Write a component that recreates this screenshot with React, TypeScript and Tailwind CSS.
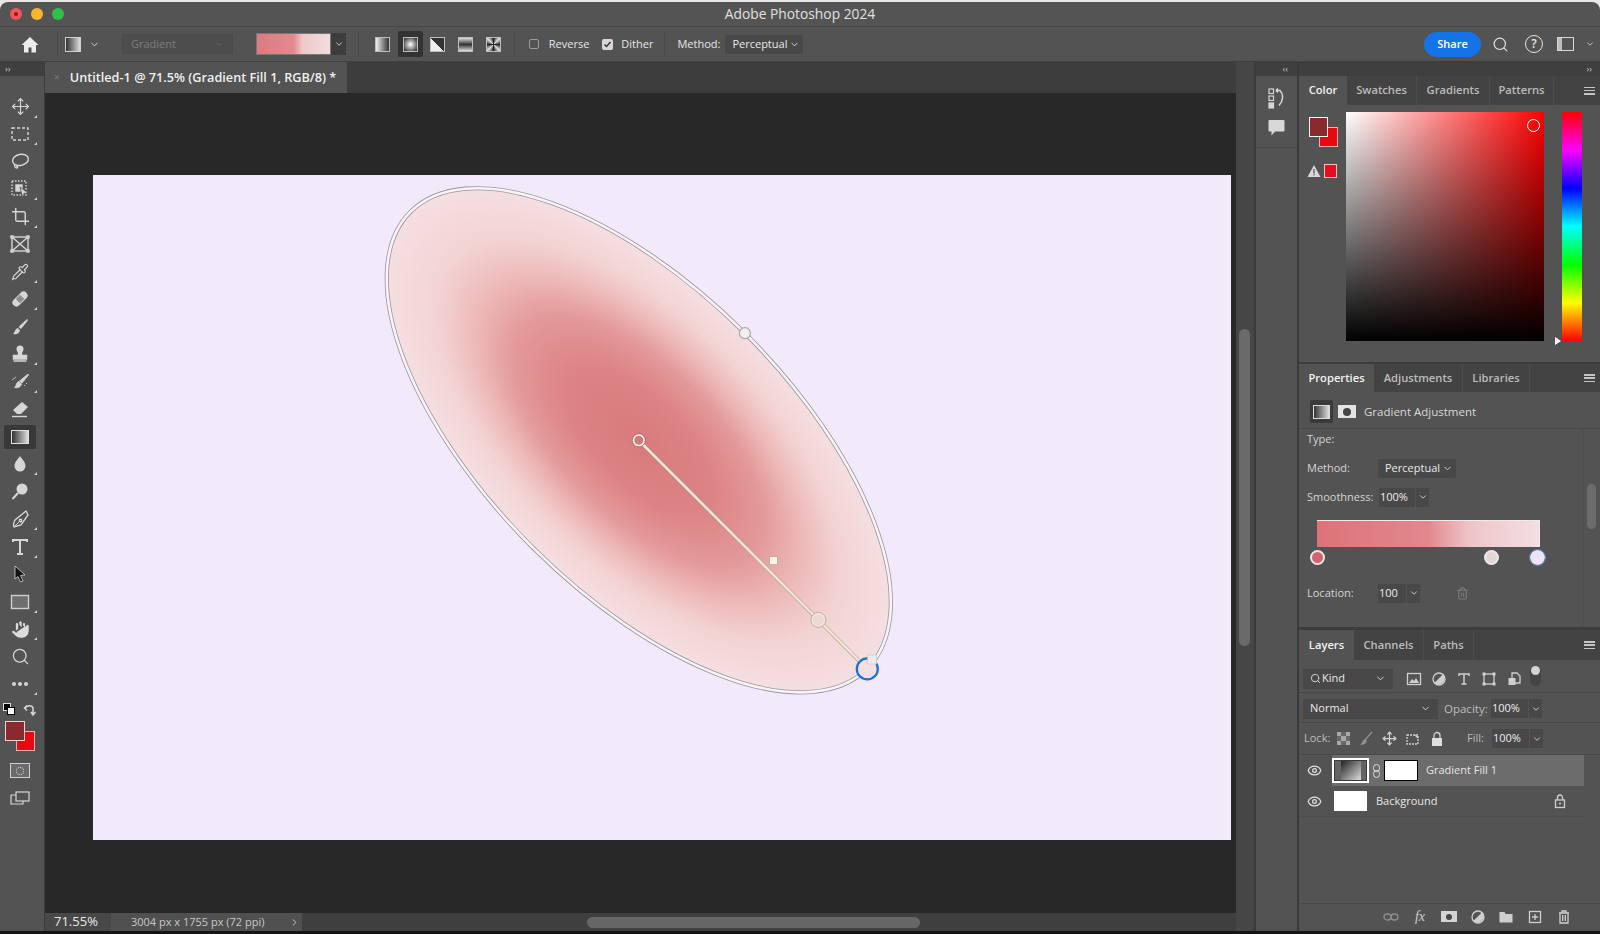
import type { ReactNode } from "react";
import { ChevronDown, ChevronRight, Crop, Eye, Hand, Move, Pipette, Search, Trash2 } from "lucide-react";

const FONT = "font-['Open_Sans','Liberation_Sans',sans-serif]";

function Svg({ children, size = 20 }: { children: ReactNode; size?: number }) {
  return (
    <svg width={size} height={size} viewBox="0 0 20 20" fill="none" stroke="#d6d6d6" strokeWidth="1.4">
      {children}
    </svg>
  );
}

const tools: ReactNode[] = [
  <Move size={19} color="#d6d6d6" strokeWidth={1.5} />,
  <Svg><rect x="2" y="4" width="16" height="12" strokeDasharray="3 2" /></Svg>,
  <Svg><ellipse cx="10.5" cy="8" rx="8" ry="5.5" transform="rotate(-12 10 8)" /><path d="M5 12c-1 2 0 4 2 4 1 0 1-2-1-2" /></Svg>,
  <Svg><rect x="2" y="2" width="14" height="14" strokeDasharray="1.5 1.5" /><rect x="6" y="6" width="6" height="6" fill="#d6d6d6" /><path d="M10 8l8 6-4 .5-1.5 4z" fill="#d6d6d6" stroke="#535353" strokeWidth="0.8" /></Svg>,
  <Crop size={19} color="#d6d6d6" strokeWidth={1.8} />,
  <Svg><rect x="2" y="3" width="16" height="14" /><path d="M2 3l16 14M18 3L2 17" /><g fill="#d6d6d6"><rect x="1" y="2" width="2" height="2" /><rect x="17" y="2" width="2" height="2" /><rect x="1" y="16" width="2" height="2" /><rect x="17" y="16" width="2" height="2" /></g></Svg>,
  <Pipette size={18} color="#d6d6d6" strokeWidth={1.6} />,
  <Svg><g transform="rotate(-45 10 10)"><rect x="1" y="6" width="18" height="8" rx="4" fill="#d6d6d6" stroke="none" /><rect x="7" y="7" width="6" height="6" fill="#8d8d8d" stroke="none" /></g></Svg>,
  <Svg><path d="M17 2c1 .5 1 1 .5 2L11 12 8.500 10zM8 11l2 2.500c-.5 3-4 4.500-7 3.500 2-1 1.500-5 5-6z" fill="#d6d6d6" stroke="none" /></Svg>,
  <Svg><circle cx="10" cy="5" r="3.500" fill="#d6d6d6" stroke="none" /><path d="M8.500 8h3v3.500h5V15h-13v-3.500h5zM3.500 17h13" fill="#d6d6d6" /></Svg>,
  <Svg><path d="M18 2l.5 1L12 11l-2.500-2zM9 9.500l2.500 2.500c-.5 3-4 4.500-7 3.500 2-1 1.500-5.500 4.500-6zM2 8l4-3M14 13l1 1M16 11l1 1" fill="#d6d6d6" stroke="#d6d6d6" strokeWidth="0.8" /></Svg>,
  <Svg><path d="M12 3l6 5-7 7H7L3 11z" fill="#d6d6d6" stroke="none" /><path d="M2 17.500h15" /></Svg>,
  null,
  <Svg><path d="M10 2c2 3 5.500 6 5.500 10a5.500 5.500 0 01-11 0C4.500 8 8 5 10 2z" fill="#d6d6d6" stroke="none" /></Svg>,
  <Svg><circle cx="12" cy="7" r="5.500" fill="#d6d6d6" stroke="none" /><path d="M8 11l-5.500 6" strokeWidth="2" /></Svg>,
  <Svg><path d="M16 2l2 4-7 10-7 2c-1-2 0-5 1-7z" /><path d="M4.500 17.500l5-5" strokeWidth="1" /><circle cx="10.500" cy="11.500" r="1.200" /></Svg>,
  <Svg><path d="M3 5V3h14v2M10 3v14M7 17h6" strokeWidth="2" /></Svg>,
  <Svg><path d="M5 2l10 9-4.500.5L13 17l-2.500 1-2.500-5.500L5 15z" fill="#111" stroke="#d6d6d6" strokeWidth="0.8" /></Svg>,
  <Svg><rect x="1.500" y="3.500" width="17" height="13" fill="#6e6e6e" stroke="#cfcfcf" /></Svg>,
  <Hand size={21} color="#535353" fill="#dcdcdc" strokeWidth={1.3} />,
  <Search size={19} color="#d6d6d6" strokeWidth={1.6} />,
  <Svg><g fill="#d6d6d6" stroke="none"><circle cx="4" cy="10" r="2" /><circle cx="10" cy="10" r="2" /><circle cx="16" cy="10" r="2" /></g></Svg>,
];

function Toolbar() {
  return (
    <div className="w-[45px] shrink-0 flex flex-col bg-[#535353] border-r border-[#3c3c3c]">
      <div className="h-[14px] bg-[#3f3f3f] pl-[5px] text-[9px] leading-[13px] text-[#c8c8c8]">››</div>
      <div className="pt-[17px] pl-[2px] flex flex-col items-start">
        {tools.map((t, i) =>
          t === null ? (
            <div key={i} className="relative w-[36px] h-[27.5px] flex items-center justify-center">
              <div className="w-[32px] h-[24px] bg-[#383838] rounded-[2px] flex items-center justify-center">
                <div className="w-[18px] h-[14px] border border-[#e0e0e0] bg-[linear-gradient(to_right,#333,#ddd)]" />
              </div>
            </div>
          ) : (
            <div key={i} className="relative w-[36px] h-[27.5px] flex items-center justify-center">
              {t}
              {i % 3 !== 2 && <span className="absolute right-[1px] bottom-[3px] w-0 h-0 border-l-[3px] border-l-transparent border-b-[3px] border-b-[#cfcfcf]" />}
            </div>
          ),
        )}
      </div>
      <div className="relative h-[50px] mt-[5px]">
        <div className="absolute left-[3px] top-0 w-[8px] h-[8px] bg-black border border-[#ddd]" />
        <div className="absolute left-[7px] top-[4px] w-[8px] h-[8px] bg-white border border-black" />
        <svg className="absolute left-[23px] top-0" width="14" height="14" viewBox="0 0 14 14" fill="none" stroke="#d6d6d6" strokeWidth="1.500">
          <path d="M2 5c3-3 7-3 8 0v6M8 9l2 3 2.500-3M4 2.500L1.500 5 4 7.500" />
        </svg>
        <div className="absolute left-[16px] top-[28px] w-[19px] h-[20px] bg-[#e8080f] border border-[#f0b0b0]" />
        <div className="absolute left-[5px] top-[18px] w-[20px] h-[20px] bg-[#8a2a2e] border border-[#f0d0d0]" />
      </div>
      <div className="mt-[10px] pr-[5px] flex flex-col items-center gap-[13px]">
        <div className="w-[20px] h-[15px] border border-[#d0d0d0] bg-[#6a6a6a] flex items-center justify-center">
          <div className="w-[8px] h-[8px] rounded-full border border-dotted border-[#e0e0e0]" />
        </div>
        <svg width="20" height="14" viewBox="0 0 20 14" fill="none" stroke="#d6d6d6" strokeWidth="1.200">
          <rect x="6" y="1" width="13" height="9" />
          <path d="M6 4H1v9h12v-3" />
        </svg>
      </div>
    </div>
  );
}

function Select({ w, children }: { w: string; children: ReactNode }) {
  return (
    <div className={`${w} h-[19px] pl-[7px] pr-[3px] flex items-center justify-between bg-[#484848] rounded-[2px] text-[11px] text-[#e8e8e8]`}>
      <span>{children}</span>
      <ChevronDown size={11} color="#e0e0e0" strokeWidth={2} />
    </div>
  );
}

function PctInput({ value, w = "w-[37px]" }: { value: string; w?: string }) {
  return (
    <div className="flex h-[19px] items-center text-[11px] text-[#ececec]">
      <div className={`${w} h-full flex items-center pl-[1px] bg-[#484848]`}>{value}</div>
      <div className="ml-px w-[13px] h-full flex items-center justify-center bg-[#484848]">
        <ChevronDown size={10} color="#e0e0e0" strokeWidth={2} />
      </div>
    </div>
  );
}

function GradType({ className, active }: { className: string; active?: boolean }) {
  return (
    <div className={`w-[25px] h-[26px] flex items-center justify-center rounded-[2px] ${active ? "bg-[#333]" : ""}`}>
      <div className={`w-[15px] h-[15px] border border-[#bdbdbd] ${className}`} />
    </div>
  );
}

function OptionsBar() {
  return (
    <div className="h-[35px] shrink-0 flex items-center bg-[#535353] border-b border-[#3f3f3f] text-[11px] text-[#e6e6e6]">
      <div className="w-[57px] flex justify-center pl-[2px]">
        <svg width="18" height="17" viewBox="0 0 18 17" fill="#ececec">
          <path d="M9 1L0.500 9h2.500v7.500h4.500v-5h3v5H15V9h2.500z" />
        </svg>
      </div>
      <div className="w-px h-[24px] bg-[#484848]" />
      <div className="ml-[7px] w-[16px] h-[15px] border border-[#d0d0d0] bg-[linear-gradient(to_right,#333,#ddd)]" />
      <ChevronDown size={11} color="#d8d8d8" strokeWidth={2} className="ml-[8px]" />
      <div className="ml-[22px] w-[111px] h-[20px] px-[8px] flex items-center justify-between bg-[#4d4d4d] border border-[#4a4a4a] text-[#7d7d7d]">
        Gradient
        <ChevronDown size={9} color="#6f6f6f" />
      </div>
      <div className="ml-[23px] w-[75px] h-[22px] border border-[#777] bg-[linear-gradient(to_right,#dc7a80,#e28a8e_50%,#f0c8c8_62%,#f3dcdf)]" />
      <div className="w-[15px] h-[22px] bg-[#3d3d3d] flex items-center justify-center">
        <ChevronDown size={10} color="#e0e0e0" strokeWidth={2} />
      </div>
      <div className="ml-[12px] w-px h-[24px] bg-[#484848]" />
      <div className="ml-[11px] flex gap-[2.700px]">
        <GradType className="bg-[linear-gradient(to_right,#eee,#333)]" />
        <GradType active className="bg-[radial-gradient(circle,#fff,#222)]" />
        <GradType className="bg-[linear-gradient(45deg,#eee_50%,#333_50%)]" />
        <GradType className="bg-[linear-gradient(to_bottom,#ddd,#333_50%,#ddd)]" />
        <GradType className="bg-[conic-gradient(#222,#ddd,#222,#ddd,#222,#ddd,#222,#ddd,#222)]" />
      </div>
      <div className="ml-[8px] w-px h-[24px] bg-[#484848]" />
      <div className="ml-[14px] w-[10px] h-[10px] rounded-[2px] border border-[#9a9a9a]" />
      <span className="ml-[10px]">Reverse</span>
      <div className="ml-[13px] w-[11px] h-[11px] rounded-[2px] bg-[#d8d8d8] flex items-center justify-center">
        <svg width="9" height="9" viewBox="0 0 9 9" fill="none" stroke="#333" strokeWidth="1.500"><path d="M1.500 4.500l2 2 4-4.500" /></svg>
      </div>
      <span className="ml-[8px]">Dither</span>
      <div className="ml-[11px] w-px h-[24px] bg-[#484848]" />
      <span className="ml-[12px]">Method:</span>
      <div className="ml-[5px]"><Select w="w-[78px]">Perceptual</Select></div>
      <div className="flex-1" />
      <div className="w-[57px] h-[25px] rounded-full bg-[#1473e6] text-white text-[11px] font-semibold flex items-center justify-center">Share</div>
      <Search size={17} color="#e6e6e6" strokeWidth={1.6} className="ml-[11px]" />
      <div className="ml-[16px] w-[18px] h-[18px] rounded-full border-[1.5px] border-[#e6e6e6] flex items-center justify-center text-[12px] font-semibold leading-none">?</div>
      <div className="ml-[14px] w-[17px] h-[14px] border border-[#d8d8d8] flex">
        <div className="w-[4px] h-full bg-[#bdbdbd]" />
      </div>
      <ChevronDown size={10} color="#d8d8d8" strokeWidth={2} className="ml-[11px] mr-[5px]" />
    </div>
  );
}

function Shape() {
  return (
    <svg className="absolute inset-0 overflow-visible" width="1138" height="665" viewBox="0 0 1138 665" fill="none">
      <defs>
        <radialGradient id="fillGrad">
          <stop offset="0" stopColor="#d97a7c" />
          <stop offset="0.3" stopColor="#dd8486" />
          <stop offset="0.5" stopColor="#e49a9a" />
          <stop offset="0.65" stopColor="#edbab9" />
          <stop offset="0.8" stopColor="#f3d3d3" />
          <stop offset="1" stopColor="#f5dfe2" />
        </radialGradient>
      </defs>
      <g transform="rotate(45 545.8 265.3)">
        <ellipse cx="545.8" cy="265.3" rx="323" ry="150.800" fill="url(#fillGrad)" />
        <ellipse cx="545.8" cy="265.3" rx="323" ry="150.800" stroke="#9a969c" strokeWidth="4.200" />
        <ellipse cx="545.8" cy="265.3" rx="323" ry="150.800" stroke="#f8f4f8" strokeWidth="2.600" />
      </g>
      <path d="M545.800 265.300L774.300 493.900" stroke="#a8968c" strokeWidth="3.600" />
      <path d="M545.800 265.300L774.300 493.900" stroke="#f8e6d8" strokeWidth="2.400" />
      <circle cx="651.900" cy="158.200" r="5.500" fill="#f3eef0" stroke="#a8a4a8" strokeWidth="1.200" />
      <circle cx="545.800" cy="265.300" r="5.500" fill="#d8777a" stroke="#fdf4ec" strokeWidth="2" />
      <circle cx="545.800" cy="265.300" r="6.500" stroke="#8a5a5a" strokeWidth="0.700" />
      <rect x="676.500" y="381.700" width="8" height="8" fill="#fbf2e8" stroke="#b09a90" strokeWidth="0.600" />
      <circle cx="725.400" cy="444.900" r="6.500" fill="#f0d6d0" stroke="#efe6e0" strokeWidth="2" />
      <circle cx="725.400" cy="444.900" r="7.500" stroke="#a89a94" strokeWidth="0.700" />
      <circle cx="774.300" cy="493.900" r="10.500" fill="#f5dfe2" stroke="#1473d6" strokeWidth="2.200" />
      <rect x="774.500" y="480" width="9" height="9" fill="#eeeaee" stroke="#c8c4c8" strokeWidth="0.600" />
    </svg>
  );
}

function Center() {
  return (
    <div className="w-[1191px] shrink-0 flex flex-col bg-[#3d3d3d]">
      <div className="h-[31px] shrink-0 flex">
        <div className="w-[302px] h-[31px] bg-[#535353] flex items-center pl-[9px] text-[12.7px] font-semibold text-[#f0f0f0]">
          <span className="text-[#7c7c7c] text-[10px] font-normal mr-[10px]">×</span>
          <span>Untitled-1 @ 71.5% (Gradient Fill 1, RGB/8) *</span>
        </div>
      </div>
      <div className="flex-1 bg-[#282828] pl-[48px] pt-[82px]">
        <div className="relative w-[1138px] h-[665px] bg-[#f2e9fb]">
          <Shape />
        </div>
      </div>
      <div className="h-[18px] shrink-0 flex items-center bg-[#424242] text-[#c8c8c8]">
        <div className="w-[66px] h-full pl-[9px] flex items-center bg-[#484848] text-[13px] text-[#e8e8e8]">71.55%</div>
        <div className="w-[191px] h-full pl-[20px] flex items-center bg-[#505050] text-[11px]">
          3004 px x 1755 px (72 ppi)
          <ChevronRight size={11} color="#d0d0d0" className="ml-auto mr-[2px]" />
        </div>
        <div className="flex-1 h-full flex items-center pl-[285px] bg-[#3f3f3f]">
          <div className="w-[333px] h-[11px] rounded-full bg-[#666]" />
        </div>
      </div>
    </div>
  );
}

function Tabs({ tabs }: { tabs: [string, string][] }) {
  return (
    <div className="flex items-stretch bg-[#434343]">
      {tabs.map(([t, w], i) => (
        <div key={t} className={`${w} flex items-center justify-center text-[11.2px] font-semibold ${i === 0 ? "bg-[#535353] text-[#f2f2f2]" : "border-r border-[#4c4c4c] text-[#bcbcbc]"}`}>
          {t}
        </div>
      ))}
      <div className="flex-1 flex items-center justify-end pr-[5px]">
        <div className="w-[11px] h-[8px] flex flex-col justify-between">
          <div className="h-[1.5px] bg-[#c4c4c4]" />
          <div className="h-[1.5px] bg-[#c4c4c4]" />
          <div className="h-[1.5px] bg-[#c4c4c4]" />
        </div>
      </div>
    </div>
  );
}

function ColorPanel() {
  return (
    <div className="h-[286px] shrink-0 flex flex-col bg-[#535353]">
      <Tabs tabs={[["Color", "w-[48px] h-[29px]"], ["Swatches", "w-[70px] h-[29px]"], ["Gradients", "w-[73px] h-[29px]"], ["Patterns", "w-[64px] h-[29px]"]]} />
      <div className="flex-1 flex">
        <div className="relative w-[47px]">
          <div className="absolute left-[20px] top-[22px] w-[19px] h-[20px] bg-[#e8080f] border border-[#f0b0b0]" />
          <div className="absolute left-[10px] top-[12px] w-[19px] h-[20px] bg-[#8a2a2e] border border-white" />
          <svg className="absolute left-[8px] top-[59px]" width="14" height="14" viewBox="0 0 14 14" fill="#d8d8d8"><path d="M7 1l6.500 12H.5z" /><path d="M6.400 5h1.200v4.500H6.400zM6.400 10.300h1.200v1.200H6.400z" fill="#535353" /></svg>
          <div className="absolute left-[25px] top-[59px] w-[13px] h-[14px] bg-[#e01020] border border-[#f0c0c0]" />
        </div>
        <div className="relative mt-[7px] w-[198px] h-[229px] bg-[linear-gradient(to_top,#000,transparent),linear-gradient(to_right,#fff,#f00)]">
          <div className="absolute left-[181px] top-[7px] w-[13px] h-[13px] rounded-full border border-white" />
        </div>
        <div className="relative mt-[7px] ml-[18px] w-[20px] h-[229px] bg-[linear-gradient(to_bottom,#f00,#f0f,#00f,#0ff,#0f0,#ff0,#f00)]">
          <span className="absolute -left-[7px] bottom-[-4px] w-0 h-0 border-y-[4px] border-y-transparent border-l-[6px] border-l-white" />
        </div>
      </div>
    </div>
  );
}

function Stop({ color, ml, ring }: { color: string; ml: string; ring?: boolean }) {
  return <div className={`${ml} w-[15px] h-[15px] rounded-full border-2 border-[#efe6e6] ${ring ? "outline outline-1 outline-[#5a86d8]" : ""} ${color}`} />;
}

function PropertiesPanel() {
  return (
    <div className="h-[263px] shrink-0 flex flex-col bg-[#535353] text-[11px] text-[#d4d4d4]">
      <Tabs tabs={[["Properties", "w-[75px] h-[28px]"], ["Adjustments", "w-[89px] h-[28px]"], ["Libraries", "w-[67px] h-[28px]"]]} />
      <div className="h-[37px] pt-[3px] flex items-center pl-[11px] border-b border-[#484848]">
        <div className="w-[23px] h-[23px] bg-[#3a3a3a] rounded-[2px] flex items-center justify-center">
          <div className="w-[17px] h-[14px] border border-[#ddd] bg-[linear-gradient(to_right,#333,#ddd)]" />
        </div>
        <div className="ml-[5px] w-[18px] h-[13px] bg-[#e4e4e4] flex items-center justify-center">
          <div className="w-[8px] h-[8px] rounded-full bg-[#444]" />
        </div>
        <span className="ml-[8px] text-[11.5px] text-[#d8d8d8]">Gradient Adjustment</span>
      </div>
      <div className="flex-1 flex">
        <div className="w-[285px] pl-[8px] border-r border-[#4d4d4d]">
          <div className="h-[21px] flex items-center">Type:</div>
          <div className="h-[36px] flex items-center">
            <span className="w-[71px]">Method:</span>
            <Select w="w-[78px]">Perceptual</Select>
          </div>
          <div className="h-[22px] flex items-center">
            <span className="w-[72px]">Smoothness:</span>
            <PctInput value="100%" w="w-[36px]" />
          </div>
          <div className="ml-[10px] mt-[12px] w-[223px] h-[27px] border-t border-r border-[#f3e8ea] bg-[linear-gradient(to_right,#dd7379,#e2888d_50%,#eec3c6_68%,#f3dfe3)]" />
          <div className="h-[21px] flex items-center">
            <Stop ml="ml-[3px]" color="bg-[#d0646e]" />
            <Stop ml="ml-[159px]" color="bg-[#e3d6d6]" />
            <Stop ml="ml-[31px]" color="bg-[#eee4fa]" ring />
          </div>
          <div className="mt-[13px] h-[24px] flex items-center">
            <span className="w-[71px]">Location:</span>
            <PctInput value="100" w="w-[28px]" />
            <Trash2 size={13} color="#7c7c7c" className="ml-[36px]" />
          </div>
        </div>
        <div className="flex-1 pl-[3px] pt-[55px]">
          <div className="w-[9px] h-[45px] rounded-full bg-[#6c6c6c]" />
        </div>
      </div>
    </div>
  );
}

function Mini({ children }: { children: ReactNode }) {
  return (
    <svg width="16" height="16" viewBox="0 0 16 16" fill="none" stroke="#cfcfcf" strokeWidth="1.300">
      {children}
    </svg>
  );
}

function LayersPanel() {
  return (
    <div className="flex-1 flex flex-col bg-[#535353] text-[11px] text-[#d8d8d8]">
      <Tabs tabs={[["Layers", "w-[55px] h-[30px]"], ["Channels", "w-[70px] h-[30px]"], ["Paths", "w-[50px] h-[30px]"]]} />
      <div className="h-[33px] pt-[5px] flex items-center pl-[4px] border-b border-[#484848]">
        <div className="w-[90px] h-[20px] px-[7px] flex items-center justify-between bg-[#484848] text-[#e8e8e8]">
          <span className="flex items-center gap-[1px]"><Search size={11} color="#ddd" />Kind</span>
          <ChevronDown size={11} color="#ddd" strokeWidth={2} />
        </div>
        <div className="ml-[13px] flex items-center gap-[9px]">
          <Mini><rect x="1.500" y="2.500" width="13" height="11" /><path d="M3 12l3-4 2 2 2-3 3 5z" fill="#cfcfcf" stroke="none" /></Mini>
          <Mini><circle cx="8" cy="8" r="6" /><path d="M4 12.200L12.200 4A6 6 0 014 12.200z" fill="#cfcfcf" /></Mini>
          <Mini><path d="M3 5V3h10v2M8 3v10M5.500 13h5" strokeWidth="1.500" /></Mini>
          <Mini><rect x="3" y="3" width="10" height="10" /><g fill="#cfcfcf" stroke="none"><rect x="1.500" y="1.500" width="3" height="3" /><rect x="11.500" y="1.500" width="3" height="3" /><rect x="1.500" y="11.500" width="3" height="3" /><rect x="11.500" y="11.500" width="3" height="3" /></g></Mini>
          <Mini><path d="M6 2h5l3 3v7H6z" /><rect x="2.500" y="7" width="7" height="7" fill="#cfcfcf" stroke="none" /></Mini>
        </div>
        <div className="ml-[8px] w-[11px] h-[20px] -mt-[6px] relative rounded-full bg-[#454545]">
          <div className="absolute top-0 left-[1px] w-[9px] h-[9px] rounded-full bg-[#d4d4d4]" />
        </div>
      </div>
      <div className="h-[30px] pt-[2px] flex items-center pl-[4px] border-b border-[#484848]">
        <div className="w-[135px] h-[20px] px-[7px] flex items-center justify-between bg-[#484848] text-[#e8e8e8]">
          Normal
          <ChevronDown size={11} color="#ddd" strokeWidth={2} />
        </div>
        <span className="ml-[6px] w-[47px] text-[#bcbcbc] text-[11.5px]">Opacity:</span>
        <PctInput value="100%" />
      </div>
      <div className="h-[32px] flex items-center pl-[5px] border-b border-[#484848]">
        <span className="w-[33px] text-[#bcbcbc]">Lock:</span>
        <div className="flex items-center gap-[8px] text-[#bdbdbd]">
          <div className="w-[13px] h-[13px] grid grid-cols-3 grid-rows-3">
            {[0, 1, 2, 3, 4, 5, 6, 7, 8].map((n) => <div key={n} className={n % 2 ? "bg-[#686868]" : "bg-[#a8a8a8]"} />)}
          </div>
          <Mini><path d="M14 1L7 9" strokeWidth="1.500" stroke="#8e8e8e" /><path d="M7 8l2 2c-1 3-4 4-7 4 2-1 2-5 5-6z" fill="#8e8e8e" stroke="none" /></Mini>
          <Move size={15} color="#d4d4d4" />
          <Mini><rect x="2" y="4" width="11" height="9" strokeDasharray="2 1" /><path d="M10 4l3 3" /></Mini>
          <Mini><path d="M5 7V4.500a3 3 0 016 0V7" /><rect x="3" y="7" width="10" height="8" fill="#ddd" stroke="none" /></Mini>
        </div>
        <span className="ml-[22px] w-[25px] text-[#bcbcbc]">Fill:</span>
        <PctInput value="100%" />
      </div>
      <div className="w-[285px] flex flex-col">
        <div className="h-[31px] flex items-center">
          <div className="w-[33px] pr-[3px] flex justify-center"><Eye size={15} color="#e0e0e0" strokeWidth={2} /></div>
          <div className="flex-1 h-full flex items-center bg-[#6c6c6c]">
            <div className="w-[37px] h-[25px] border-2 border-white bg-[#3a3a3a] p-[1px]">
              <div className="w-full h-full flex justify-center bg-[#636363]">
                <div className="w-[20px] h-full bg-[linear-gradient(135deg,#222,#ddd)]" />
              </div>
            </div>
            <svg className="ml-[3px]" width="9" height="14" viewBox="0 0 9 14" fill="none" stroke="#ddd" strokeWidth="1">
              <rect x="1.500" y="0.500" width="6" height="7" rx="3" />
              <rect x="1.500" y="6.500" width="6" height="7" rx="3" />
            </svg>
            <div className="ml-[3px] w-[34px] h-[21px] bg-white border border-black" />
            <span className="ml-[8px] text-[#e6e6e6]">Gradient Fill 1</span>
          </div>
        </div>
        <div className="h-[31px] flex items-center border-b border-[#4d4d4d]">
          <div className="w-[33px] pr-[3px] flex justify-center"><Eye size={15} color="#e0e0e0" strokeWidth={2} /></div>
          <div className="ml-[2px] w-[33px] h-[20px] bg-white" />
          <span className="ml-[9px] text-[#e6e6e6]">Background</span>
          <span className="ml-auto mr-[16px]">
            <Mini><path d="M5.500 7V4.500a2.500 2.500 0 015 0V7" /><rect x="3.500" y="7" width="9" height="7.500" /><circle cx="8" cy="10.500" r="1" fill="#cfcfcf" stroke="none" /></Mini>
          </span>
        </div>
      </div>
      <div className="flex-1" />
      <div className="h-[28px] pb-[2px] flex items-center justify-end border-t border-[#484848] pr-[28px] gap-[12.800px]">
        <Mini><rect x="1" y="5" width="7" height="6" rx="3" stroke="#8e8e8e" /><rect x="8" y="5" width="7" height="6" rx="3" stroke="#8e8e8e" /></Mini>
        <span className="w-[16px] text-center italic font-['Liberation_Serif',serif] text-[14px] text-[#cfcfcf]">fx</span>
        <div className="w-[16px] h-[11px] bg-[#d4d4d4] flex items-center justify-center"><div className="w-[6px] h-[6px] rounded-full bg-[#484848]" /></div>
        <Mini><circle cx="8" cy="8" r="6" /><path d="M4 12.200L12.200 4A6 6 0 014 12.200z" fill="#cfcfcf" /></Mini>
        <Mini><path d="M1.500 3h5l1 2h7v8.500h-13z" fill="#cfcfcf" stroke="none" /></Mini>
        <Mini><rect x="2.500" y="2.500" width="11" height="11" /><path d="M8 5v6M5 8h6" /></Mini>
        <Mini><path d="M3 4h10M6 4V2h4v2M4 4v10h8V4M6.700 6v6M9.300 6v6" /></Mini>
      </div>
    </div>
  );
}

export default function App() {
  return (
    <div className={`${FONT} w-[1600px] h-[934px] flex flex-col overflow-hidden bg-[#e8e8e8]`}>
      <div className="mt-[2px] flex-1 flex flex-col min-h-0 rounded-t-[8px] overflow-hidden">
        <div className="relative h-[25px] shrink-0 flex items-center justify-center bg-[#545454] border-b border-[#454545] text-[13.800px] text-[#e0e0e0]">
          <div className="absolute left-[10px] top-[6px] flex gap-[9px]">
            <div className="w-[12px] h-[12px] rounded-full bg-[#f0555a] flex items-center justify-center"><div className="w-[4px] h-[4px] rounded-full bg-[#8a1a1a]" /></div>
            <div className="w-[12px] h-[12px] rounded-full bg-[#f6b72e]" />
            <div className="w-[12px] h-[12px] rounded-full bg-[#2fc04a]" />
          </div>
          Adobe Photoshop 2024
        </div>
        <OptionsBar />
        <div className="flex-1 min-h-0 flex bg-[#3c3c3c]">
          <Toolbar />
          <Center />
          <div className="w-[18px] shrink-0 bg-[#464646] pl-[3px] pt-[267px]">
            <div className="w-[11px] h-[317px] rounded-full bg-[#6a6a6a]" />
          </div>
          <div className="w-[2px] shrink-0 bg-[#3a3a3a]" />
          <div className="w-[41px] shrink-0 flex flex-col">
            <div className="h-[14px] text-right pr-[9px] text-[9px] leading-[13px] text-[#c8c8c8] bg-[#3f3f3f]">‹‹</div>
            <div className="h-[72px] bg-[#535353] border-b border-[#454545] flex flex-col items-center pt-[12px] gap-[10px]">
              <svg width="17" height="21" viewBox="0 0 17 21" fill="none" stroke="#d4d4d4" strokeWidth="1.200">
                <rect x="1" y="1" width="4.500" height="4.500" />
                <rect x="1" y="8" width="4.500" height="4.500" />
                <rect x="1" y="15" width="4.500" height="5" fill="#d4d4d4" />
                <path d="M8 2.500h4c4 4 3 11-1 15M8 2.500l2-2M8 2.500l2 2" strokeWidth="1.600" />
              </svg>
              <svg width="17" height="17" viewBox="0 0 17 17" fill="#d8d8d8">
                <path d="M1.500 1h14a1 1 0 011 1v9.500a1 1 0 01-1 1H7l-3.500 4V12.500h-2a1 1 0 01-1-1V2a1 1 0 011-1z" />
              </svg>
            </div>
            <div className="flex-1 bg-[#535353]" />
          </div>
          <div className="w-[2px] shrink-0 bg-[#3a3a3a]" />
          <div className="w-[301px] shrink-0 flex flex-col">
            <div className="h-[14px] shrink-0 text-right pr-[8px] text-[9px] leading-[13px] text-[#c8c8c8] bg-[#3f3f3f]">››</div>
            <ColorPanel />
            <div className="h-[2px] shrink-0" />
            <PropertiesPanel />
            <div className="h-[3px] shrink-0" />
            <LayersPanel />
          </div>
        </div>
      </div>
      <div className="h-[3px] shrink-0 bg-[#141414]" />
    </div>
  );
}
